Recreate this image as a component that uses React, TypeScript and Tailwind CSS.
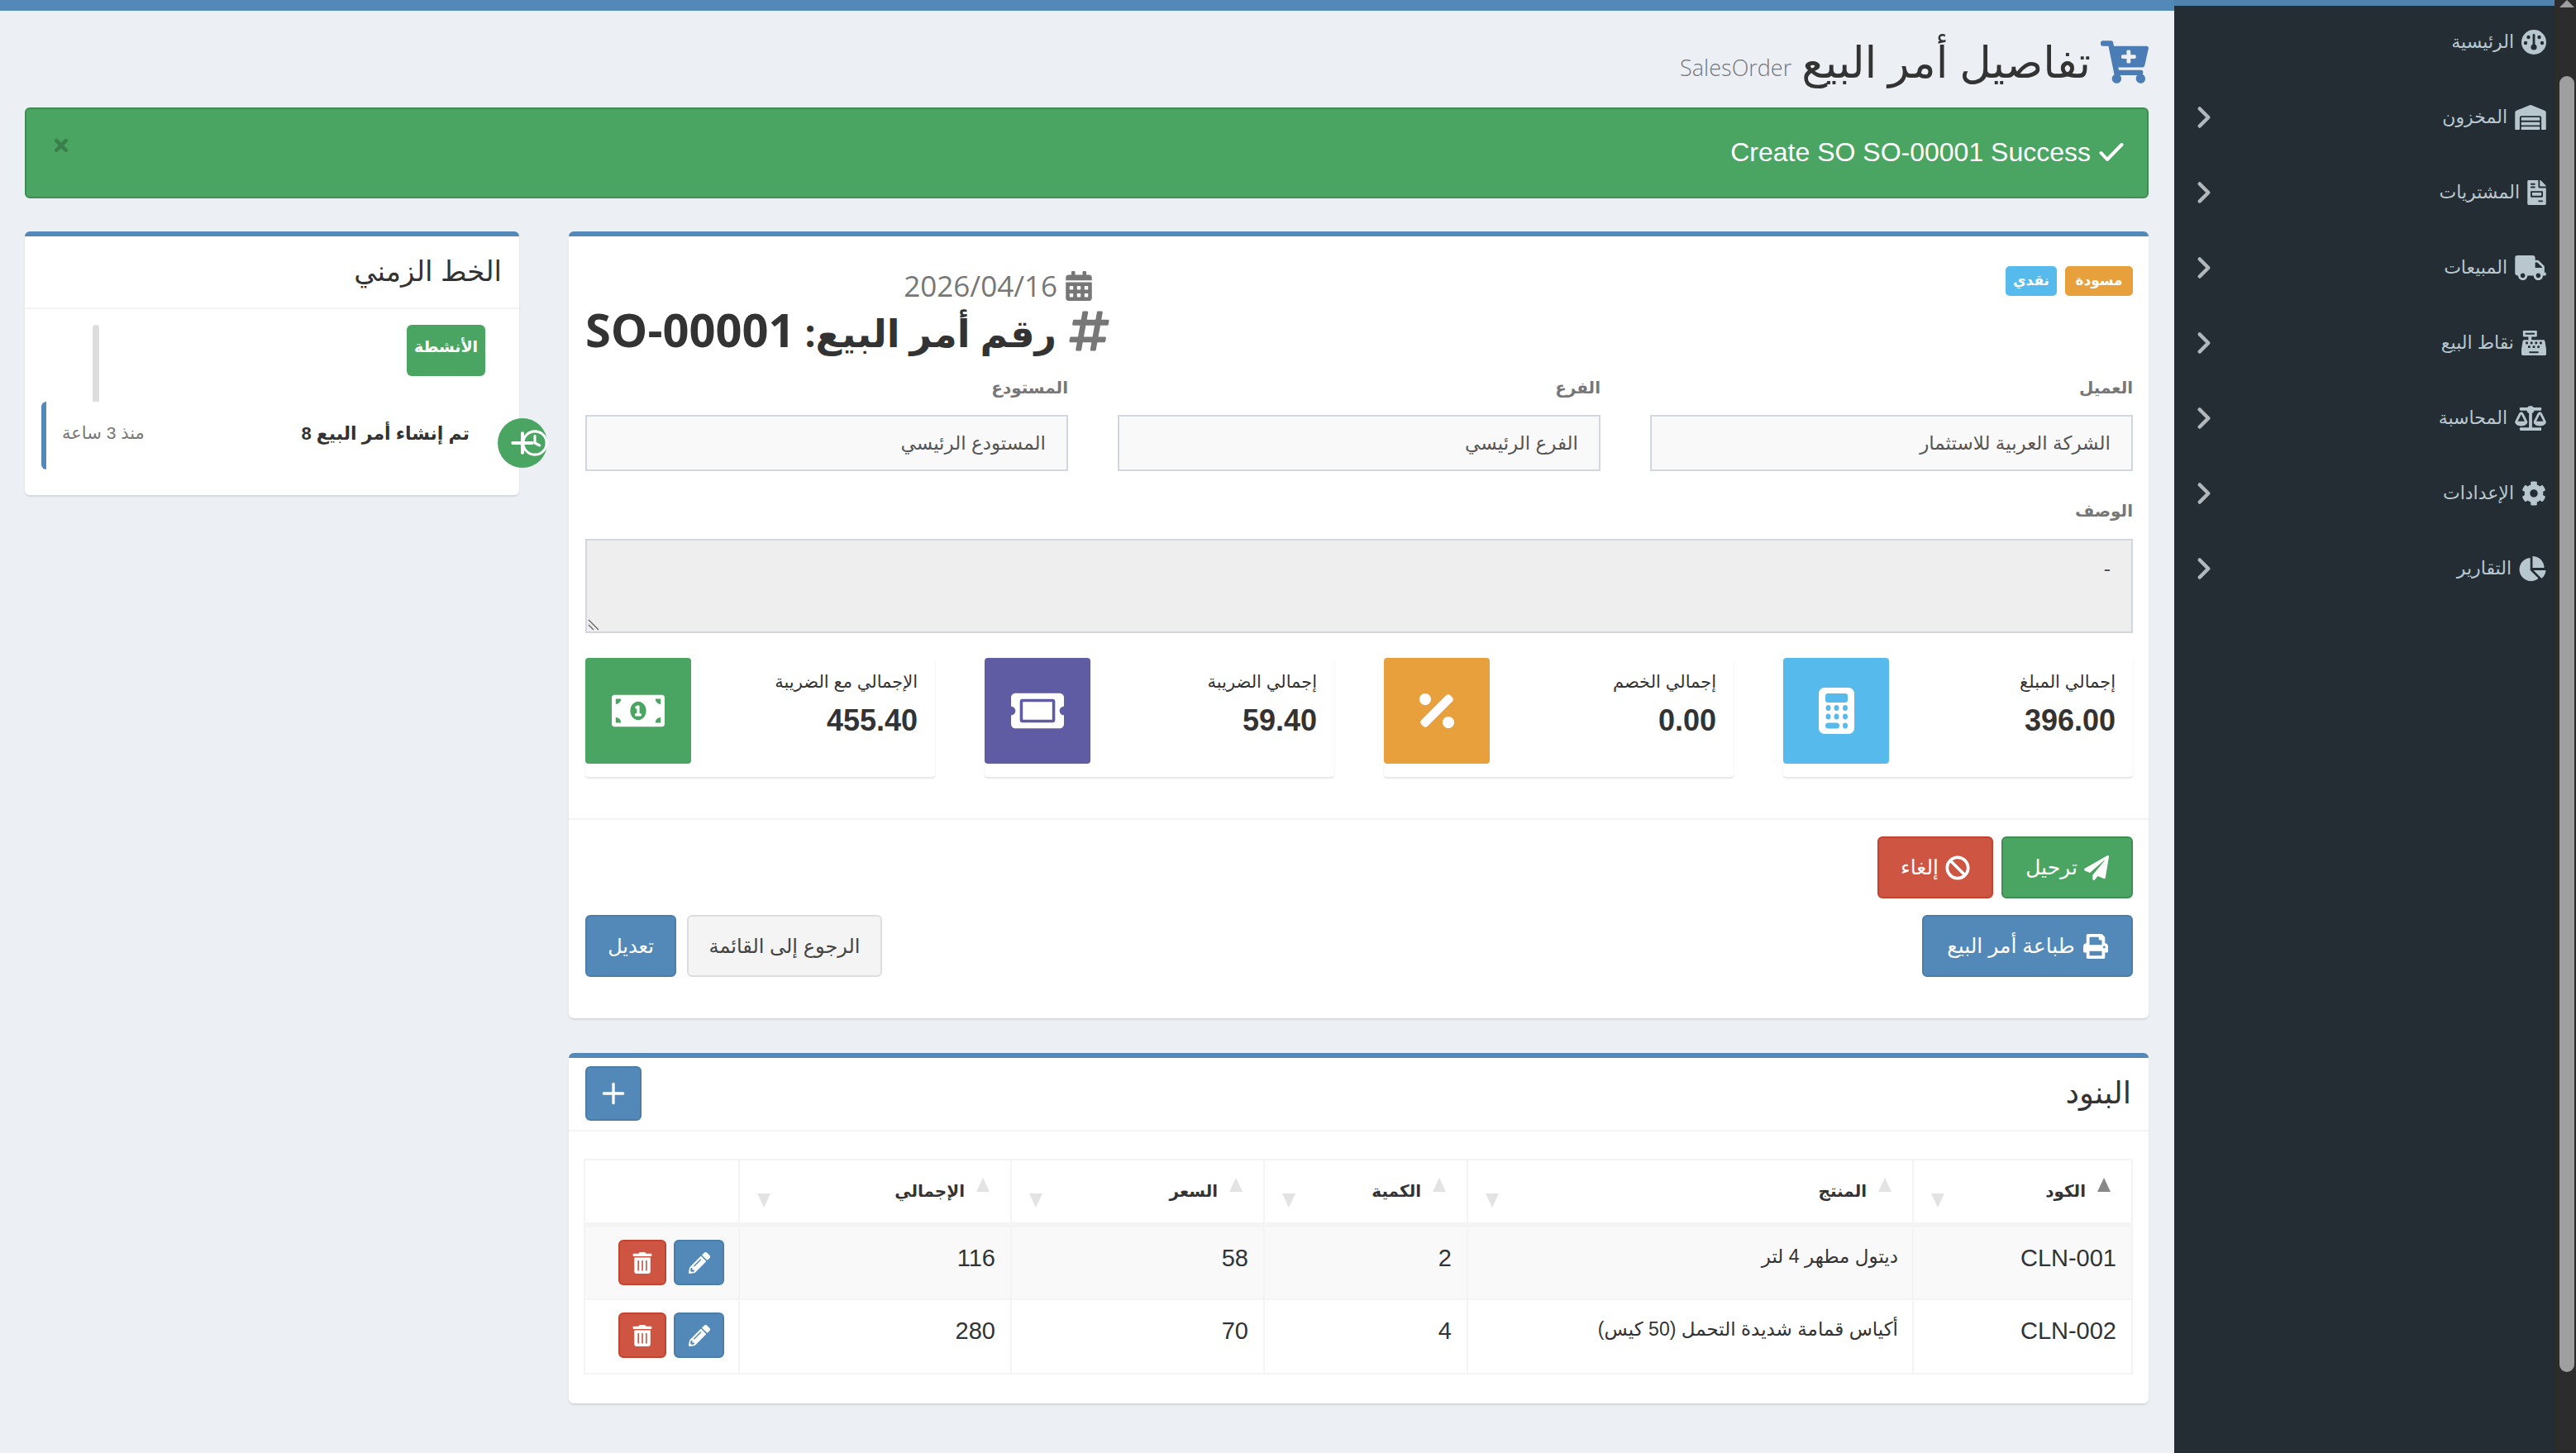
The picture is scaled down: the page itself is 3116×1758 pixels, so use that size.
import { ChevronRight, Clock, Plus } from "lucide-react";
import {
  FaBalanceScale,
  FaBan,
  FaCalendarAlt,
  FaCartPlus,
  FaCashRegister,
  FaChartPie,
  FaCog,
  FaFileInvoice,
  FaHashtag,
  FaMoneyBillAlt,
  FaPaperPlane,
  FaPencilAlt,
  FaPercentage,
  FaPrint,
  FaTicketAlt,
  FaTimes,
  FaTrashAlt,
  FaTruck,
  FaWarehouse,
} from "react-icons/fa";

function GaugeIcon({ className }: { className?: string }) {
  return (
    <svg viewBox="0 0 30 30" className={className}>
      <circle cx="15" cy="15" r="15" fill="currentColor" />
      <g fill="#252d34">
        <circle cx="5" cy="16" r="2.2" />
        <circle cx="8.5" cy="9" r="2.2" />
        <circle cx="21.5" cy="9" r="2.2" />
        <circle cx="25" cy="16" r="2.2" />
        <rect x="13.6" y="5" width="2.8" height="14" rx="1.4" />
        <circle cx="15" cy="21" r="3.6" />
      </g>
    </svg>
  );
}

function CalculatorIcon() {
  return (
    <svg viewBox="0 0 43 56" className="h-[56px] w-[43px]">
      <rect width="43" height="56" rx="7" fill="#fff" />
      <g fill="#56bbec">
        <rect x="8" y="7" width="27" height="11" rx="3" />
        <ellipse cx="11.5" cy="24.5" rx="3" ry="3.5" />
        <ellipse cx="21.5" cy="24.5" rx="3" ry="3.5" />
        <ellipse cx="32" cy="24.5" rx="3" ry="3.5" />
        <ellipse cx="11.5" cy="35" rx="3" ry="3.5" />
        <ellipse cx="21.5" cy="35" rx="3" ry="3.5" />
        <ellipse cx="32" cy="35" rx="3" ry="3.5" />
        <rect x="8" y="42.5" width="17" height="7" rx="3.5" />
        <ellipse cx="32" cy="46" rx="3" ry="3.5" />
      </g>
    </svg>
  );
}

const menu = [
  { label: "الرئيسية", icon: GaugeIcon, size: "h-[30px] w-[30px]", arrow: false },
  { label: "المخزون", icon: FaWarehouse, size: "h-[30px] w-[38px]", arrow: true },
  { label: "المشتريات", icon: FaFileInvoice, size: "h-[30px] w-[23px]", arrow: true },
  { label: "المبيعات", icon: FaTruck, size: "h-[30px] w-[38px]", arrow: true },
  { label: "نقاط البيع", icon: FaCashRegister, size: "h-[30px] w-[30px]", arrow: true },
  { label: "المحاسبة", icon: FaBalanceScale, size: "h-[30px] w-[38px]", arrow: true },
  { label: "الإعدادات", icon: FaCog, size: "h-[30px] w-[30px]", arrow: true },
  { label: "التقارير", icon: FaChartPie, size: "h-[30px] w-[33px]", arrow: true },
];

const totals = [
  { label: "إجمالي المبلغ", value: "396.00", icon: <CalculatorIcon />, color: "bg-[#56bbec]" },
  { label: "إجمالي الخصم", value: "0.00", icon: <FaPercentage className="text-[56px]" />, color: "bg-[#e8a03c]" },
  { label: "إجمالي الضريبة", value: "59.40", icon: <FaTicketAlt className="text-[64px]" />, color: "bg-[#605ca3]" },
  { label: "الإجمالي مع الضريبة", value: "455.40", icon: <FaMoneyBillAlt className="text-[64px]" />, color: "bg-[#4ba562]" },
];

const columns = [
  { label: "الكود", width: "w-[265px]", active: true },
  { label: "المنتج", width: "w-[539px]", active: false },
  { label: "الكمية", width: "w-[246px]", active: false },
  { label: "السعر", width: "w-[306px]", active: false },
  { label: "الإجمالي", width: "w-[329px]", active: false },
];

const rows = [
  { code: "CLN-001", name: "ديتول مطهر  4 لتر", qty: 2, price: 58, total: 116 },
  { code: "CLN-002", name: "أكياس قمامة شديدة التحمل (50 كيس)", qty: 4, price: 70, total: 280 },
];

function Field({ label, value }: { label: string; value: string }) {
  return (
    <div>
      <div className="flex h-[40px] items-center text-[20px] font-bold text-[#777]">{label}</div>
      <div className="mt-[13px] flex h-[68px] items-center border-2 border-[#d2d6de] bg-[#f9f9f9] px-[25px] text-[23px] text-[#555]">
        {value}
      </div>
    </div>
  );
}

function Sidebar() {
  return (
    <aside className="w-[460px] shrink-0 bg-[#252d34]">
      <div className="h-[7px] bg-[#4f83ae]" />
      <ul className="-mt-[2px]">
        {menu.map((item) => (
          <li key={item.label} className="flex h-[91px] items-center justify-between pr-[10px] pl-[15px] text-[22px] text-[#b8c7ce]">
            <span className="flex items-center gap-[9px]">
              <item.icon className={item.size} />
              {item.label}
            </span>
            {item.arrow && <ChevronRight size={42} strokeWidth={2.6} color="#b0b8bd" />}
          </li>
        ))}
      </ul>
    </aside>
  );
}

export default function App() {
  return (
    <div dir="rtl" className="flex h-[1758px] w-[3116px] overflow-hidden bg-[#ecf0f5] font-['Liberation_Sans','DejaVu_Sans',sans-serif] text-[29px] text-[#333]">
      {/* fake browser scrollbar */}
      <div className="relative w-[26px] shrink-0 bg-[#2c2c2c] pr-[2px] pl-[6px]">
        <div className="mx-auto h-0 w-0 border-x-[9px] border-b-[9px] border-x-transparent border-b-[#9f9f9f]" />
        <div className="mt-[83px] h-[1568px] rounded-[9px] bg-[#9f9f9f]" />
      </div>

      <Sidebar />

      <main className="min-w-0 flex-1">
        <div className="h-[13px] bg-[#5389b8]" />
        <div className="pr-[31px] pl-[30px]">
          {/* page title */}
          <div className="flex h-[117px] items-center gap-[12px] pt-[6px]">
            <FaCartPlus className="text-[58px] text-[#4a7cb5]" />
            <h1 className="-mt-[2px] font-['Open_Sans','DejaVu_Sans',sans-serif] text-[53px] leading-none">تفاصيل أمر البيع</h1>
            <span className="mt-[16px] font-['Open_Sans',sans-serif] text-[27px] font-light text-[#777]">SalesOrder</span>
          </div>

          {/* success alert */}
          <div className="flex h-[110px] items-center justify-between rounded-[6px] border-2 border-[#3f8d52] bg-[#4ba562] pr-[28px] pl-[30px] text-[32px] text-white">
            <span className="flex items-center gap-[10px] pb-[2px]">
              <svg viewBox="0 0 30 24" className="h-[24px] w-[30px]" fill="none" stroke="currentColor" strokeWidth="4" strokeLinecap="round" strokeLinejoin="round">
                <path d="M2.5 13 10 21 27.5 3" />
              </svg>
              <span>Create SO SO-00001 Success</span>
            </span>
            <FaTimes className="-mt-[18px] text-[24px] text-[#3a7f4b]" />
          </div>

          <div className="mt-[40px] flex items-start gap-[60px]">
            <div className="w-[1911px] shrink-0">
              {/* order box */}
              <section className="rounded-[6px] border-t-[6px] border-[#5389b8] bg-white shadow-[0_2px_2px_rgba(0,0,0,0.1)]">
                <div className="pr-[19px] pl-[20px]">
                  <div className="flex h-[163px] items-start justify-between pt-[36px]">
                    <div className="flex gap-[10px] text-[17px] font-bold text-white">
                      <span className="flex h-[36px] w-[82px] items-center justify-center rounded-[5px] bg-[#e8a03c]">مسودة</span>
                      <span className="flex h-[36px] w-[62px] items-center justify-center rounded-[5px] bg-[#56bbec]">نقدي</span>
                    </div>
                    <div className="flex flex-col items-start font-['Open_Sans','DejaVu_Sans',sans-serif]">
                      <div className="flex items-center gap-[8px] pr-[22px] text-[35px] leading-[48px] text-[#777]">
                        <FaCalendarAlt className="text-[36px]" />
                        <span>2026/04/16</span>
                      </div>
                      <div className="flex items-center gap-[12px] text-[56px] font-bold leading-[56px]">
                        <FaHashtag className="text-[55px] text-[#777]" />
                        <span>
                          <span className="text-[46px]">رقم أمر البيع: </span>SO-00001
                        </span>
                      </div>
                    </div>
                  </div>

                  <div className="grid grid-cols-3 gap-[60px]">
                    <Field label="العميل" value="الشركة العربية للاستثمار" />
                    <Field label="الفرع" value="الفرع الرئيسي" />
                    <Field label="المستودع" value="المستودع الرئيسي" />
                  </div>

                  <div className="mt-[28px] flex h-[40px] items-center text-[20px] font-bold text-[#777]">الوصف</div>
                  <div className="relative mt-[14px] h-[114px] border-2 border-[#d2d6de] bg-[#eee] px-[25px] pt-[16px] text-[25px] text-[#555]">
                    -
                    <svg viewBox="0 0 16 16" className="absolute bottom-[1px] left-[1px] h-[16px] w-[16px] text-[#666]" fill="none" stroke="currentColor" strokeWidth="1.4">
                      <path d="M1 3 13 15M1 9 7 15" />
                    </svg>
                  </div>

                  <div className="mt-[30px] grid grid-cols-4 gap-[60px] pb-[50px]">
                    {totals.map((box) => (
                      <div key={box.label} className="flex h-[144px] items-start justify-between rounded-[4px] bg-white pr-[21px] shadow-[0_2px_2px_rgba(0,0,0,0.1)]">
                        <div className="pt-[12px]">
                          <div className="text-[21px] leading-[34px]">{box.label}</div>
                          <div className="mt-[8px] text-[36px] font-bold leading-[44px]">{box.value}</div>
                        </div>
                        <div className={`flex h-[128px] w-[128px] items-center justify-center rounded-[4px] text-white ${box.color}`}>
                          {box.icon}
                        </div>
                      </div>
                    ))}
                  </div>
                </div>

                <div className="border-t-2 border-[#f4f4f4] pt-[20px] pr-[19px] pb-[50px] pl-[20px]">
                  <div className="flex gap-[10px] text-[25px] text-white">
                    <button className="flex h-[75px] w-[159px] items-center justify-center gap-[8px] rounded-[6px] border-2 border-[#3f8d52] bg-[#4ba562]">
                      <FaPaperPlane className="text-[30px]" />
                      ترحيل
                    </button>
                    <button className="flex h-[75px] w-[140px] items-center justify-center gap-[8px] rounded-[6px] border-2 border-[#c4432f] bg-[#cd5542]">
                      <FaBan className="text-[30px]" />
                      إلغاء
                    </button>
                  </div>
                  <div className="mt-[20px] flex justify-between text-[25px]">
                    <button className="flex h-[75px] w-[255px] items-center justify-center gap-[10px] rounded-[6px] border-2 border-[#4a7ea8] bg-[#5389b8] text-white">
                      <FaPrint className="text-[30px]" />
                      طباعة أمر البيع
                    </button>
                    <div className="flex gap-[13px] text-[24px]">
                      <button className="flex h-[75px] w-[236px] items-center justify-center rounded-[6px] border-2 border-[#ddd] bg-[#f4f4f4] text-[#444]">الرجوع إلى القائمة</button>
                      <button className="flex h-[75px] w-[110px] items-center justify-center rounded-[6px] border-2 border-[#4a7ea8] bg-[#5389b8] text-white">تعديل</button>
                    </div>
                  </div>
                </div>
              </section>

              {/* items box */}
              <section className="mt-[42px] rounded-[6px] border-t-[6px] border-[#5389b8] bg-white pb-[35px] shadow-[0_2px_2px_rgba(0,0,0,0.1)]">
                <div className="flex h-[89px] items-start justify-between border-b-2 border-[#f4f4f4] pt-[10px] pr-[21px] pl-[20px]">
                  <h2 className="mt-[14px] text-[37px] leading-none">البنود</h2>
                  <button className="flex h-[66px] w-[68px] items-center justify-center rounded-[6px] border-2 border-[#4a7ea8] bg-[#5389b8] text-white">
                    <Plus size={40} strokeWidth={2} />
                  </button>
                </div>
                <div className="pt-[33px] pr-[19px] pl-[20px]">
                  <table className="w-[1872px] table-fixed border-collapse border-2 border-[#f4f4f4] text-[29px]">
                    <thead>
                      <tr className="h-[79px] border-b-[6px] border-[#f4f4f4]">
                        {columns.map((col) => (
                          <th key={col.label} className={`relative border-2 border-[#f4f4f4] pr-[55px] pb-[2px] text-right align-middle text-[20px] font-bold ${col.width}`}>
                            {col.label}
                            <span className={`absolute top-[21px] right-[25px] h-0 w-0 border-x-[8px] border-b-[17px] border-x-transparent ${col.active ? "border-b-[#888]" : "border-b-[#e3e3e3]"}`} />
                            <span className="absolute top-[40px] left-[21px] h-0 w-0 border-x-[8px] border-t-[17px] border-x-transparent border-t-[#e3e3e3]" />
                          </th>
                        ))}
                        <th className="w-[187px] border-2 border-[#f4f4f4]" />
                      </tr>
                    </thead>
                    <tbody>
                      {rows.map((row, i) => (
                        <tr key={row.code} className={`h-[90px] ${i === 0 ? "bg-[#f9f9f9]" : ""}`}>
                          <td className="border-2 border-[#f4f4f4] px-[18px] pt-[16px] align-top">{row.code}</td>
                          <td className="border-2 border-[#f4f4f4] px-[17px] pt-[18px] align-top text-[23px]">{row.name}</td>
                          <td className="border-2 border-[#f4f4f4] px-[18px] pt-[16px] align-top">{row.qty}</td>
                          <td className="border-2 border-[#f4f4f4] px-[18px] pt-[16px] align-top">{row.price}</td>
                          <td className="border-2 border-[#f4f4f4] px-[18px] pt-[16px] align-top">{row.total}</td>
                          <td className="border-2 border-[#f4f4f4] px-[17px] pt-[15px] align-top">
                            <div className="flex gap-[9px] text-[26px] text-white">
                              <button className="flex h-[55px] w-[61px] items-center justify-center rounded-[6px] border-2 border-[#4a7ea8] bg-[#5389b8]">
                                <FaPencilAlt />
                              </button>
                              <button className="flex h-[55px] w-[58px] items-center justify-center rounded-[6px] border-2 border-[#c4432f] bg-[#cd5542]">
                                <FaTrashAlt />
                              </button>
                            </div>
                          </td>
                        </tr>
                      ))}
                    </tbody>
                  </table>
                </div>
              </section>
            </div>

            {/* timeline box */}
            <section className="relative w-[598px] shrink-0 rounded-[6px] border-t-[6px] border-[#5389b8] bg-white pb-[31px] shadow-[0_2px_2px_rgba(0,0,0,0.1)]">
              <div className="flex h-[88px] items-center border-b-2 border-[#f4f4f4] pr-[21px] pb-[2px] text-[34px] leading-none">الخط الزمني</div>
              <div className="relative pt-[19px]">
                <span className="absolute top-[19px] left-[82px] h-[93px] w-[8px] rounded-t-[4px] bg-[#ddd]" />
                <div className="mr-[41px] flex h-[62px] w-[95px] items-center justify-center rounded-[6px] bg-[#4ba562] pb-[8px] text-[19px] font-bold text-white">الأنشطة</div>
                <div className="mt-[31px] mr-[40px] ml-[20px] flex h-[82px] items-start justify-between rounded-l-[6px] border-l-[6px] border-[#5389b8] pt-[22px] pr-[20px] pl-[19px]">
                  <span className="text-[22px] font-bold">تم إنشاء أمر البيع 8</span>
                  <span className="text-[21px] text-[#777]">منذ 3 ساعة</span>
                </div>
              </div>
              <div className="absolute top-[220px] -right-[34px] flex h-[60px] w-[60px] items-center justify-center rounded-full bg-[#4ba562] text-white">
                <Plus size={40} strokeWidth={2.4} className="absolute left-[10px]" />
                <Clock size={34} strokeWidth={2.2} className="absolute -right-[2px]" />
              </div>
            </section>
          </div>
        </div>
      </main>
    </div>
  );
}
